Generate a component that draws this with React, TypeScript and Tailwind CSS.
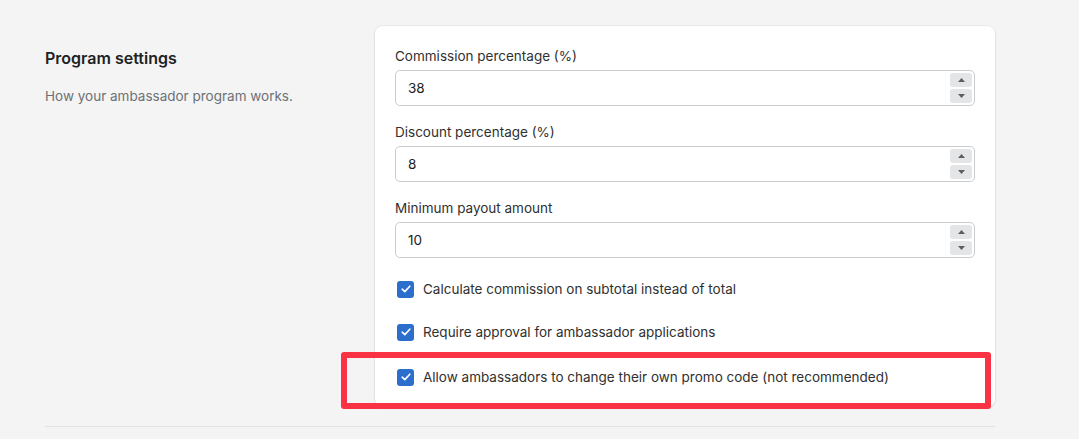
import React from "react";

const font = { fontFamily: "Inter, 'Liberation Sans', sans-serif" };

function Spinner() {
  return (
    <div className="flex flex-col gap-[2px]">
      {["up", "down"].map((d) => (
        <div
          key={d}
          className="flex h-[14px] w-[22px] items-center justify-center rounded-[3px] bg-[#e4e5e7]"
        >
          <svg width="7" height="4" viewBox="0 0 7 4">
            {d === "up" ? (
              <path d="M3.5 0 L7 4 L0 4 Z" fill="#5c5f62" />
            ) : (
              <path d="M0 0 L7 0 L3.5 4 Z" fill="#5c5f62" />
            )}
          </svg>
        </div>
      ))}
    </div>
  );
}

function NumberField({ label, value, className = "" }: { label: string; value: string; className?: string }) {
  return (
    <div className={className}>
      <div className="text-[13.5px] leading-5 text-[#303030]">{label}</div>
      <div className="mt-1 flex h-[36px] items-center justify-between rounded-[5px] border border-[#c9cccf] pl-3 pr-[2px]">
        <span className="text-[13.5px] text-[#202223]">{value}</span>
        <Spinner />
      </div>
    </div>
  );
}

function Check({ label, className = "" }: { label: string; className?: string }) {
  return (
    <div className={`flex h-5 items-center gap-[9px] pl-[2px] ${className}`}>
      <div className="flex h-[17px] w-[17px] items-center justify-center rounded-[3px] bg-[#2c6ecb]">
        <svg width="10" height="8" viewBox="0 0 10 8">
          <path d="M1.2 4.2 L3.8 6.6 L8.8 1.2" fill="none" stroke="white" strokeWidth="1.6" strokeLinecap="round" strokeLinejoin="round" />
        </svg>
      </div>
      <span className="text-[13.5px] text-[#303030]">{label}</span>
    </div>
  );
}

export default function App() {
  return (
    <div className="min-h-[439px] w-full bg-[#f4f4f4]" style={font}>
      <div className="flex pt-[26px]">
        <div className="w-[375px] shrink-0 pl-[45px] pt-[20px]">
          <h2 className="text-[16px] font-semibold leading-6 text-[#202223]">Program settings</h2>
          <p className="mt-4 text-[13.5px] leading-5 text-[#6d7175]">How your ambassador program works.</p>
        </div>
        <div className="relative w-[620px] rounded-lg bg-white px-5 pb-5 pt-5 shadow-[0_0_0_1px_rgba(0,0,0,0.04),0_1px_3px_rgba(0,0,0,0.08)]">
          <NumberField label="Commission percentage (%)" value="38" />
          <NumberField label="Discount percentage (%)" value="8" className="mt-4" />
          <NumberField label="Minimum payout amount" value="10" className="mt-4" />
          <Check label="Calculate commission on subtotal instead of total" className="mt-[21px]" />
          <Check label="Require approval for ambassador applications" className="mt-[23px]" />
          <Check label="Allow ambassadors to change their own promo code (not recommended)" className="mt-[25px]" />
          <div className="pointer-events-none absolute left-[-34px] top-[326px] h-[57px] w-[650px] rounded-[3px] border-[6px] border-[#fa3344]" />
        </div>
      </div>
      <div className="ml-[45px] mt-[19px] w-[950px] border-t border-[#e1e1e1]" />
    </div>
  );
}
